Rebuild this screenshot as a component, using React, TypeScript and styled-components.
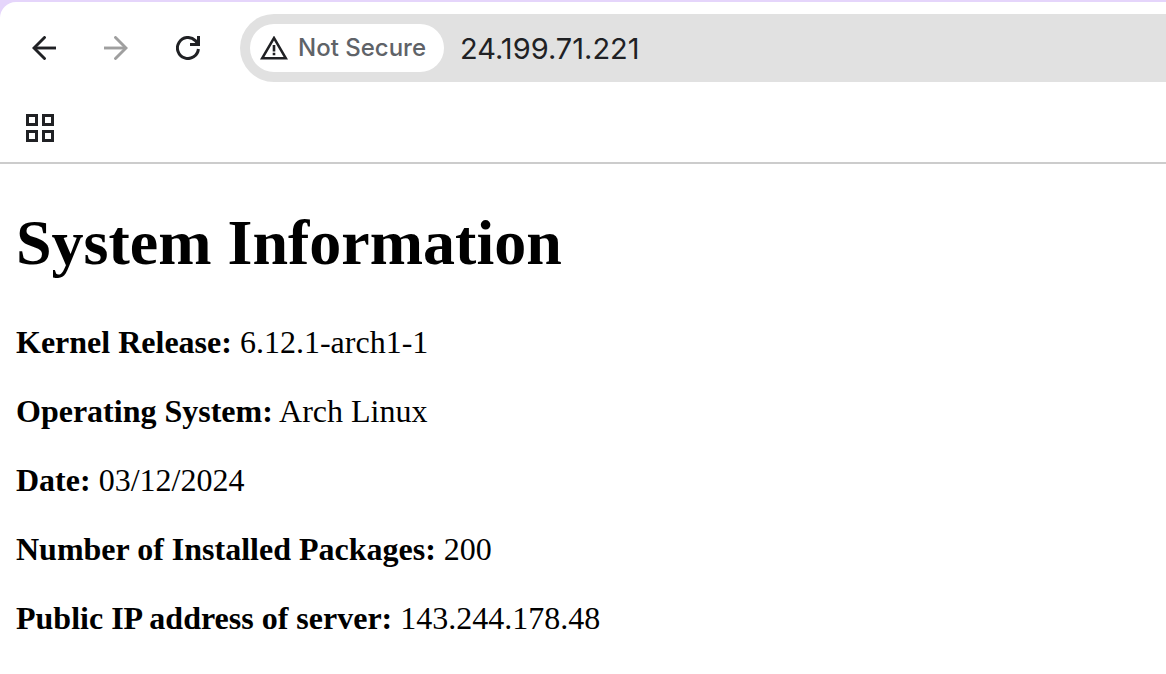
import React from "react";
import styled, { createGlobalStyle } from "styled-components";

const GlobalStyle = createGlobalStyle`
  *, *::before, *::after { box-sizing: border-box; }
  body {
    margin: 0;
    background: #ffffff;
    color: #000000;
    font-family: "Liberation Serif", "Times New Roman", serif;
  }
`;

const WindowFrame = styled.div`
  padding-top: 2px;
  background: #e5d5fb;
`;

const Chrome = styled.header`
  background: #ffffff;
  border-top-left-radius: 16px;
  border-bottom: 2px solid #cccccc;
  font-family: Inter, sans-serif;
`;

const Toolbar = styled.nav`
  display: flex;
  align-items: center;
  padding: 12px 0 12px 8px;
`;

const IconButton = styled.button`
  display: flex;
  align-items: center;
  justify-content: center;
  flex: none;
  width: 72px;
  height: 64px;
  padding: 0;
  border: 0;
  background: none;
  color: #202124;

  &:disabled {
    color: #9f9f9f;
  }
`;

const AddressBar = styled.div`
  display: flex;
  align-items: center;
  flex: 1;
  min-width: 0;
  height: 68px;
  margin-left: 16px;
  padding-left: 10px;
  border-radius: 34px 0 0 34px;
  background: #e1e1e1;
`;

const SecurityChip = styled.button`
  display: flex;
  align-items: center;
  flex: none;
  gap: 10px;
  height: 48px;
  padding: 0 18px 0 10px;
  border: 0;
  border-radius: 24px;
  background: #ffffff;
  color: #5f6368;
  font: 500 24px/32px Inter, sans-serif;
  white-space: nowrap;
`;

const AddressInput = styled.input`
  flex: 1;
  min-width: 0;
  height: 48px;
  margin-left: 16px;
  padding: 0;
  border: 0;
  outline: 0;
  background: none;
  color: #202124;
  font: 400 29px/36px Inter, sans-serif;
`;

const BookmarksBar = styled.div`
  display: flex;
  align-items: center;
  height: 68px;
  padding-left: 4px;
`;

const Page = styled.main`
  padding: 43px 16px 16px;
`;

const Title = styled.h1`
  margin: 0 0 45px;
  font-size: 64px;
  line-height: 72px;
`;

const Fact = styled.p`
  margin: 0 0 32px;
  font-size: 32px;
  line-height: 37px;
`;

const BackIcon = () => (
  <svg width="24" height="24" viewBox="0 0 24 24" fill="none" stroke="currentColor" strokeWidth="2.9" aria-hidden="true">
    <path d="M24 12H2" />
    <path d="M12.5 1.5L2 12L12.5 22.5" strokeLinecap="round" />
  </svg>
);

const ForwardIcon = () => (
  <svg width="24" height="24" viewBox="0 0 24 24" fill="none" stroke="currentColor" strokeWidth="2.9" aria-hidden="true">
    <path d="M0 12H22" />
    <path d="M11.5 1.5L22 12L11.5 22.5" strokeLinecap="round" />
  </svg>
);

const ReloadIcon = () => (
  <svg width="24" height="24" viewBox="0 0 24 24" fill="none" stroke="currentColor" strokeWidth="3" aria-hidden="true">
    <path d="M22.4 13A10.5 10.5 0 1 1 19.4 4.6L22 8" />
    <path d="M22.5 0V8.5H14" />
  </svg>
);

const WarningIcon = () => (
  <svg width="28" height="24" viewBox="0 0 28 24" fill="#202124" aria-hidden="true">
    <path fillRule="evenodd" d="M14 -0.5L28 23.5H0ZM14 4.6L4.4 21H23.6Z" />
    <path d="M12.7 9h2.6v6.5h-2.6zM12.7 16.8h2.6v2.5h-2.6z" />
  </svg>
);

const AppsIcon = () => (
  <svg width="28" height="28" viewBox="0 0 28 28" fill="none" stroke="currentColor" strokeWidth="3" aria-hidden="true">
    <path d="M1.5 1.5h9v9h-9zM17.5 1.5h9v9h-9zM1.5 17.5h9v9h-9zM17.5 17.5h9v9h-9z" />
  </svg>
);

const facts = [
  { label: "Kernel Release:", value: "6.12.1-arch1-1" },
  { label: "Operating System:", value: "Arch Linux" },
  { label: "Date:", value: "03/12/2024" },
  { label: "Number of Installed Packages:", value: "200" },
  { label: "Public IP address of server:", value: "143.244.178.48" },
];

export default function App() {
  return (
    <>
      <GlobalStyle />
      <WindowFrame>
        <Chrome>
          <Toolbar aria-label="Browser navigation">
            <IconButton type="button" aria-label="Back"><BackIcon /></IconButton>
            <IconButton type="button" aria-label="Forward" disabled><ForwardIcon /></IconButton>
            <IconButton type="button" aria-label="Reload"><ReloadIcon /></IconButton>
            <AddressBar>
              <SecurityChip type="button">
                <WarningIcon />
                Not Secure
              </SecurityChip>
              <AddressInput type="text" aria-label="Address" defaultValue="24.199.71.221" spellCheck={false} />
            </AddressBar>
          </Toolbar>
          <BookmarksBar>
            <IconButton type="button" aria-label="Apps"><AppsIcon /></IconButton>
          </BookmarksBar>
        </Chrome>
      </WindowFrame>
      <Page>
        <Title>System Information</Title>
        {facts.map((fact) => (
          <Fact key={fact.label}>
            <strong>{fact.label}</strong> {fact.value}
          </Fact>
        ))}
      </Page>
    </>
  );
}
